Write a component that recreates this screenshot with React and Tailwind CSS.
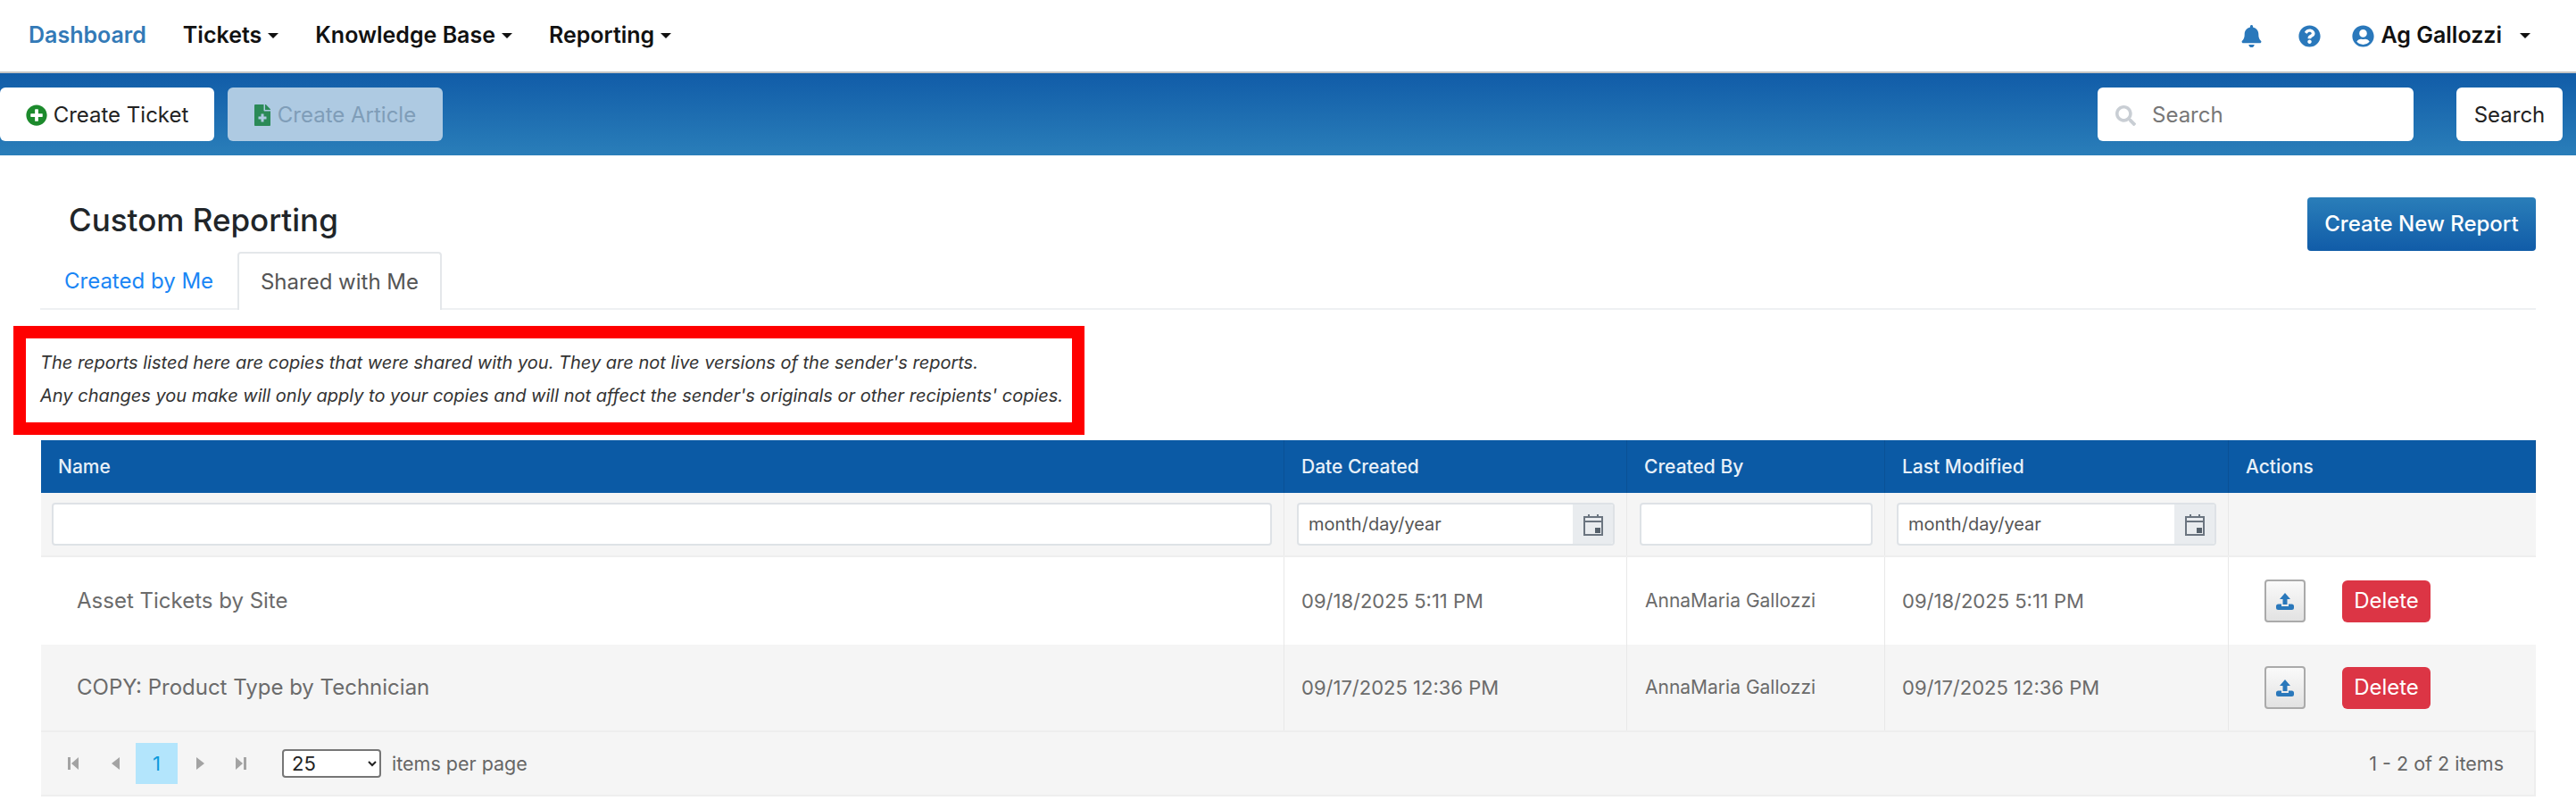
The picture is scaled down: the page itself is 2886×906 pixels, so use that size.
import { FaBell, FaFileMedical, FaPlusCircle, FaQuestionCircle, FaUserCircle, FaSearch } from "react-icons/fa";

const Caret = ({ className = "" }) => (
  <span className={`inline-block h-0 w-0 border-x-[6px] border-t-[6px] border-x-transparent border-t-current ${className}`} />
);

const NavItem = ({ label, className }) => (
  <div className={`flex items-center gap-[7px] text-[25px] font-semibold text-[#111] ${className}`}>
    {label}
    <Caret />
  </div>
);

const UploadIcon = () => (
  <svg width="20" height="19" viewBox="0 0 20 19" fill="#2a78bb">
    <path d="M10 0l6 7h-3.5v6h-5V7H4z" />
    <path d="M2.5 12.5H6v2.5h8v-2.5h3.5a2.5 2.5 0 012.5 2.5v1.5a2.5 2.5 0 01-2.5 2.5h-15A2.5 2.5 0 010 16.5V15a2.5 2.5 0 012.5-2.5z" />
  </svg>
);

const CalendarIcon = () => (
  <svg width="22" height="25" viewBox="0 0 22 25" fill="none" stroke="#6b7580" strokeWidth="2">
    <rect x="1" y="4" width="20" height="20" />
    <path d="M1 9h20M6 1v4M16 1v4" />
    <rect x="13" y="16" width="6" height="6" fill="#55606b" stroke="none" />
  </svg>
);

const DateFilter = ({ className }) => (
  <div className={`flex h-[48px] overflow-hidden rounded border-2 border-[#dee2e6] bg-white ${className}`}>
    <div className="flex flex-1 items-center pl-[11px] text-[20px] text-[#555]">month/day/year</div>
    <div className="flex w-[45px] items-center justify-center bg-[#e9ecef]">
      <CalendarIcon />
    </div>
  </div>
);

const PagerIcon = ({ dir, bar }) => (
  <svg width="14" height="18" viewBox="0 0 14 18" fill="#a3a3a3">
    {dir === "left" ? <path d={bar ? "M13 2v14L5 9z" : "M11 2v14L2 9z"} /> : <path d={bar ? "M1 2v14l8-7z" : "M3 2v14l9-7z"} />}
    {bar && (dir === "left" ? <rect x="1" y="2" width="3" height="14" /> : <rect x="10" y="2" width="3" height="14" />)}
  </svg>
);

const rows = [
  { name: "Asset Tickets by Site", date: "09/18/2025 5:11 PM", bg: "bg-white", h: "h-[98px]" },
  { name: "COPY: Product Type by Technician", date: "09/17/2025 12:36 PM", bg: "bg-[#f5f5f5]", h: "h-[96px]" },
];

const gridCols = "grid grid-cols-[1393px_384px_289px_385px_344px]";

export default function App() {
  return (
    <div className="h-[906px] w-[2886px] overflow-hidden bg-white font-['Inter',sans-serif]">
      {/* top nav */}
      <div className="flex h-[82px] items-center border-b-2 border-[#c4c4c4] pr-[51px] pl-[32px]">
        <div className="text-[25px] font-semibold text-[#337ab7]">Dashboard</div>
        <NavItem label="Tickets" className="ml-[41px]" />
        <NavItem label="Knowledge Base" className="ml-[41px]" />
        <NavItem label="Reporting" className="ml-[41px]" />
        <FaBell className="ml-auto text-[25px] text-[#2a78bb]" />
        <FaQuestionCircle className="ml-[40px] text-[25px] text-[#2a78bb]" />
        <FaUserCircle className="ml-[35px] text-[25px] text-[#2a78bb]" />
        <div className="ml-[7px] text-[25px] font-semibold text-[#111]">Ag Gallozzi</div>
        <Caret className="ml-[20px] text-[#111]" />
      </div>

      {/* action bar */}
      <div className="flex h-[92px] items-center bg-gradient-to-b from-[#115ca8] to-[#2a7eb9] pr-[15px]">
        <button className="flex h-[60px] w-[240px] items-center justify-center gap-[7px] rounded-md bg-white pt-[2px] text-[24px] text-[#222]">
          <FaPlusCircle className="text-[24px] text-[#1c8a2c]" />
          Create Ticket
        </button>
        <button className="ml-[15px] flex h-[60px] w-[241px] items-center justify-center gap-[5px] rounded-md bg-[#aecae2] pt-[2px] pr-[3px] text-[24px] text-[#7f9db8]">
          <FaFileMedical className="text-[24px] text-[#2b8a57]" />
          Create Article
        </button>
        <div className="ml-auto flex h-[60px] w-[354px] items-center rounded-md bg-white pt-[2px] pl-[20px] text-[24px] text-[#777]">
          <FaSearch className="text-[23px] text-[#c9ced4]" />
          <span className="ml-[18px]">Search</span>
        </div>
        <button className="ml-[48px] h-[60px] w-[119px] rounded-md bg-white pt-[2px] text-[24px] text-[#222]">Search</button>
      </div>

      {/* heading + tabs */}
      <div className="relative h-[190px] pl-[45px]">
        <div className="absolute top-[55px] left-[77px] text-[35px] leading-none font-medium text-[#212529]">Custom Reporting</div>
        <button className="absolute top-[47px] left-[2585px] h-[60px] w-[256px] rounded bg-gradient-to-b from-[#2a7eb9] to-[#115ca8] text-[24px] font-medium text-white">
          Create New Report
        </button>
        <div className="flex h-[173px] w-[2796px] items-end border-b-2 border-[#eef0f2]">
          <div className="-mb-[2px] flex h-[64px] w-[221px] items-center pl-[27px] text-[24px] text-[#1a86f5]">Created by Me</div>
          <div className="-mb-[2px] flex h-[65px] w-[229px] items-center justify-center rounded-t border-2 border-b-0 border-[#e4e7ea] bg-white text-[24px] text-[#555]">
            Shared with Me
          </div>
        </div>
      </div>

      {/* red notice */}
      <div className="mt-[1px] ml-[15px] flex h-[122px] w-[1200px] flex-col justify-center gap-[15px] border-[14px] border-[#ff0000] pb-[4px] pl-[16px] text-[20px] leading-[22px] text-[#333] italic">
        <div>The reports listed here are copies that were shared with you. They are not live versions of the sender's reports.</div>
        <div>Any changes you make will only apply to your copies and will not affect the sender's originals or other recipients' copies.</div>
      </div>

      {/* table */}
      <div className="mt-[6px] ml-[46px] w-[2795px] text-[21px]">
        <div className={`${gridCols} h-[59px] items-center bg-[#0b5aa5] font-medium text-[#e8f0f8]`}>
          {["Name", "Date Created", "Created By", "Last Modified", "Actions"].map((h) => (
            <div key={h} className="flex h-full items-center border-r border-[#0a5196] pl-[19px]">{h}</div>
          ))}
        </div>

        <div className={`${gridCols} h-[72px] border-b-2 border-[#eeeeee] bg-[#f5f5f5]`}>
          <div className="flex items-center border-r border-[#e8e8e8] pr-[13px] pl-[12px]">
            <div className="h-[48px] w-full rounded border-2 border-[#dee2e6] bg-white" />
          </div>
          <div className="flex items-center border-r border-[#e8e8e8] pr-[13px] pl-[14px]">
            <DateFilter className="w-full" />
          </div>
          <div className="flex items-center border-r border-[#e8e8e8] pr-[13px] pl-[14px]">
            <div className="h-[48px] w-full rounded border-2 border-[#dee2e6] bg-white" />
          </div>
          <div className="flex items-center border-r border-[#e8e8e8] pr-[13px] pl-[13px]">
            <DateFilter className="w-full" />
          </div>
          <div />
        </div>

        {rows.map((r) => (
          <div key={r.name} className={`${gridCols} ${r.h} ${r.bg} text-[#6b6b6b]`}>
            <div className="flex items-center border-r border-[#e8e8e8] pl-[40px] text-[24px]">{r.name}</div>
            <div className="flex items-center border-r border-[#e8e8e8] pl-[19px] text-[22px]">{r.date}</div>
            <div className="flex items-center border-r border-[#e8e8e8] pl-[20px]">AnnaMaria Gallozzi</div>
            <div className="flex items-center border-r border-[#e8e8e8] pl-[19px] text-[22px]">{r.date}</div>
            <div className="flex items-center pl-[40px]">
              <button className="flex h-[48px] w-[46px] items-center justify-center rounded border-2 border-[#aaaaaa] bg-gradient-to-b from-[#fafafa] to-[#e2e2e2]">
                <UploadIcon />
              </button>
              <button className="ml-[41px] h-[47px] w-[99px] rounded-md bg-[#dc3545] text-[24px] text-white">Delete</button>
            </div>
          </div>
        ))}

        {/* pager */}
        <div className="flex h-[74px] items-center border-y-2 border-r-2 border-[#eeeeee] bg-[#f5f5f5] pr-[34px] pl-[29px] text-[21.5px] text-[#666]">
          <PagerIcon dir="left" bar />
          <div className="ml-[34px]"><PagerIcon dir="left" /></div>
          <div className="ml-[15px] flex h-[46px] w-[47px] items-center justify-center bg-[#b3e5fc] text-[22px] text-[#0a9bdc]">1</div>
          <div className="ml-[18px]"><PagerIcon dir="right" /></div>
          <div className="ml-[32px]"><PagerIcon dir="right" bar /></div>
          <select defaultValue="25" className="ml-[39px] h-[32px] w-[111px] rounded-[4px] border-2 border-[#767676] bg-white pl-[5px] text-[22px] leading-none text-[#222]">
            <option>25</option>
          </select>
          <span className="ml-[12px]">items per page</span>
          <span className="ml-auto">1 - 2 of 2 items</span>
        </div>
      </div>
    </div>
  );
}
